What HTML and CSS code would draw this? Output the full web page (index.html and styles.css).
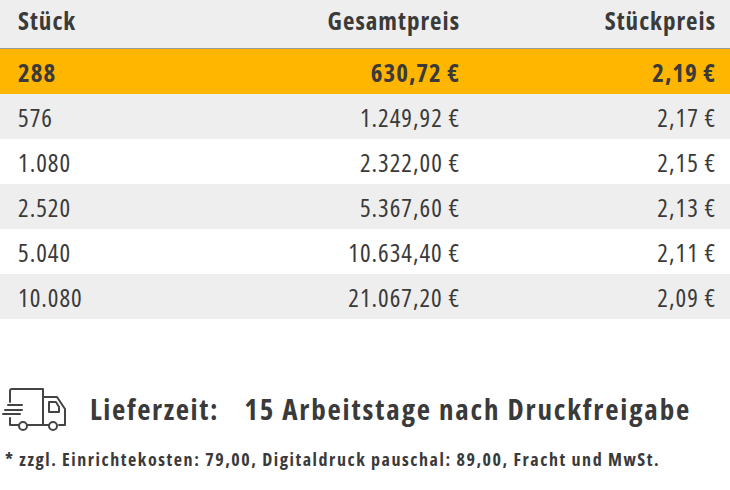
FILE: index.html
```html
<!DOCTYPE html>
<html lang="de">
<head>
<meta charset="utf-8">
<link rel="stylesheet" href="styles.css">
</head>
<body>
<div class="table">
  <div class="row head">
    <div class="c1">Stück</div><div class="c2">Gesamtpreis</div><div class="c3">Stückpreis</div>
  </div>
  <div class="row active">
    <div class="c1">288</div><div class="c2">630,72 €</div><div class="c3">2,19 €</div>
  </div>
  <div class="row grey">
    <div class="c1">576</div><div class="c2">1.249,92 €</div><div class="c3">2,17 €</div>
  </div>
  <div class="row">
    <div class="c1">1.080</div><div class="c2">2.322,00 €</div><div class="c3">2,15 €</div>
  </div>
  <div class="row grey">
    <div class="c1">2.520</div><div class="c2">5.367,60 €</div><div class="c3">2,13 €</div>
  </div>
  <div class="row">
    <div class="c1">5.040</div><div class="c2">10.634,40 €</div><div class="c3">2,11 €</div>
  </div>
  <div class="row grey">
    <div class="c1">10.080</div><div class="c2">21.067,20 €</div><div class="c3">2,09 €</div>
  </div>
</div>
<div class="delivery">
  <svg class="truck" width="66" height="50" viewBox="0 0 66 50" fill="none" stroke="#444" stroke-width="2" stroke-linecap="round" stroke-linejoin="round">
    <path d="M8 19V8a2 2 0 0 1 2-2H41V42"/>
    <path d="M41 14H55L63 26V42H57"/>
    <path d="M47 19H54L57 24V29H47Z"/>
    <path d="M8 35V42H17"/>
    <path d="M25 42H47"/>
    <circle cx="21" cy="43" r="4"/>
    <circle cx="51" cy="43" r="4"/>
    <path d="M6 22H20M3 27H20M1 31H18"/>
  </svg>
  <span class="label">Lieferzeit:</span>
  <span class="value">15 Arbeitstage nach Druckfreigabe</span>
</div>
<p class="note">* zzgl. Einrichtekosten: 79,00, Digitaldruck pauschal: 89,00, Fracht und MwSt.</p>
</body>
</html>
```
FILE: styles.css
```css
body {
  margin: 0;
  background: #fff;
  color: #3a3a3a;
  font-family: "Open Sans", "Roboto", sans-serif;
  font-stretch: 75%;
}
.table {
  width: 730px;
}
.row {
  display: grid;
  grid-template-columns: 200px 274px 1fr;
  height: 45px;
  align-items: center;
  font-size: 25px;
  letter-spacing: 1px;
  padding-right: 14px;
  box-sizing: border-box;
}
.row .c1 { padding-left: 18px; }
.row .c2, .row .c3 { text-align: right; }
.row .c2 { padding-right: 14px; }
.head {
  height: 49px;
  background: #eeeeee;
  border-bottom: 1px solid #9a9a9a;
  font-weight: bold;
  padding-bottom: 8px;
}
.active {
  background: #ffb600;
  font-weight: bold;
}
.grey {
  background: #eeeeee;
}
.delivery {
  display: flex;
  align-items: center;
  margin-top: 64px;
  padding-left: 2px;
  height: 50px;
}
.truck {
  flex: none;
}
.label {
  font-weight: bold;
  font-size: 29px;
  letter-spacing: 1.6px;
  margin-left: 22px;
}
.value {
  font-weight: bold;
  font-size: 29px;
  letter-spacing: 1.85px;
  margin-left: 25px;
}
.note {
  margin: 14px 0 0 5px;
  font-weight: bold;
  font-size: 18px;
  letter-spacing: 1.55px;
}
```
